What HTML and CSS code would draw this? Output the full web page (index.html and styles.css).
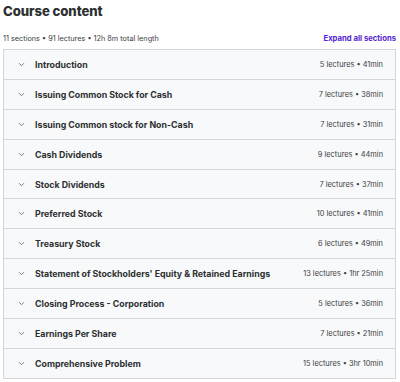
FILE: index.html
```html
<!DOCTYPE html>
<html>
<head>
<meta charset="utf-8">
<link rel="stylesheet" href="styles.css">
</head>
<body>
<div class="page">
  <h2 class="title">Course content</h2>
  <div class="meta">
    <span class="stats">11 sections • 91 lectures • 12h 8m total length</span>
    <span class="expand">Expand all sections</span>
  </div>
  <div class="list">
    <div class="row"><span class="chev"><svg width="7" height="5" viewBox="0 0 7 5"><path d="M1 1.2 L3.5 3.7 L6 1.2" fill="none" stroke="#6a6f73" stroke-width="0.9"/></svg></span><span class="name">Introduction</span><span class="info">5 lectures • 41min</span></div>
    <div class="row"><span class="chev"><svg width="7" height="5" viewBox="0 0 7 5"><path d="M1 1.2 L3.5 3.7 L6 1.2" fill="none" stroke="#6a6f73" stroke-width="0.9"/></svg></span><span class="name">Issuing Common Stock for Cash</span><span class="info">7 lectures • 38min</span></div>
    <div class="row"><span class="chev"><svg width="7" height="5" viewBox="0 0 7 5"><path d="M1 1.2 L3.5 3.7 L6 1.2" fill="none" stroke="#6a6f73" stroke-width="0.9"/></svg></span><span class="name">Issuing Common stock for Non-Cash</span><span class="info">7 lectures • 31min</span></div>
    <div class="row"><span class="chev"><svg width="7" height="5" viewBox="0 0 7 5"><path d="M1 1.2 L3.5 3.7 L6 1.2" fill="none" stroke="#6a6f73" stroke-width="0.9"/></svg></span><span class="name">Cash Dividends</span><span class="info">9 lectures • 44min</span></div>
    <div class="row"><span class="chev"><svg width="7" height="5" viewBox="0 0 7 5"><path d="M1 1.2 L3.5 3.7 L6 1.2" fill="none" stroke="#6a6f73" stroke-width="0.9"/></svg></span><span class="name">Stock Dividends</span><span class="info">7 lectures • 37min</span></div>
    <div class="row"><span class="chev"><svg width="7" height="5" viewBox="0 0 7 5"><path d="M1 1.2 L3.5 3.7 L6 1.2" fill="none" stroke="#6a6f73" stroke-width="0.9"/></svg></span><span class="name">Preferred Stock</span><span class="info">10 lectures • 41min</span></div>
    <div class="row"><span class="chev"><svg width="7" height="5" viewBox="0 0 7 5"><path d="M1 1.2 L3.5 3.7 L6 1.2" fill="none" stroke="#6a6f73" stroke-width="0.9"/></svg></span><span class="name">Treasury Stock</span><span class="info">6 lectures • 49min</span></div>
    <div class="row"><span class="chev"><svg width="7" height="5" viewBox="0 0 7 5"><path d="M1 1.2 L3.5 3.7 L6 1.2" fill="none" stroke="#6a6f73" stroke-width="0.9"/></svg></span><span class="name">Statement of Stockholders' Equity &amp; Retained Earnings</span><span class="info">13 lectures • 1hr 25min</span></div>
    <div class="row"><span class="chev"><svg width="7" height="5" viewBox="0 0 7 5"><path d="M1 1.2 L3.5 3.7 L6 1.2" fill="none" stroke="#6a6f73" stroke-width="0.9"/></svg></span><span class="name">Closing Process - Corporation</span><span class="info">5 lectures • 36min</span></div>
    <div class="row"><span class="chev"><svg width="7" height="5" viewBox="0 0 7 5"><path d="M1 1.2 L3.5 3.7 L6 1.2" fill="none" stroke="#6a6f73" stroke-width="0.9"/></svg></span><span class="name">Earnings Per Share</span><span class="info">7 lectures • 21min</span></div>
    <div class="row"><span class="chev"><svg width="7" height="5" viewBox="0 0 7 5"><path d="M1 1.2 L3.5 3.7 L6 1.2" fill="none" stroke="#6a6f73" stroke-width="0.9"/></svg></span><span class="name">Comprehensive Problem</span><span class="info">15 lectures • 3hr 10min</span></div>
  </div>
</div>
</body>
</html>
```
FILE: styles.css
```css
html, body {
  margin: 0;
  padding: 0;
  background: #ffffff;
}
body {
  font-family: "Inter", "Noto Sans", sans-serif;
  color: #2d2f31;
}
.page {
  padding: 0 4px 0 3px;
}
.title {
  margin: 0;
  padding-top: 1px;
  font-size: 13.2px;
  line-height: 20px;
  font-weight: 800;
  letter-spacing: -0.1px;
}
.meta {
  display: flex;
  justify-content: space-between;
  align-items: center;
  height: 28px;
  padding-top: 6px;
  box-sizing: border-box;
}
.stats {
  font-size: 7.3px;
  color: #3e4143;
}
.expand {
  font-size: 7.7px;
  font-weight: 700;
  color: #5624d0;
}
.list {
  border: 1px solid #d1d7dc;
  border-bottom: none;
}
.row {
  display: flex;
  align-items: center;
  height: 28.9px;
  background: #f7f9fa;
  border-bottom: 1px solid #d1d7dc;
  padding: 0 12px 0 14px;
}
.chev {
  display: flex;
  width: 7px;
  margin-right: 10px;
}
.name {
  flex: 1;
  font-size: 8.8px;
  font-weight: 700;
  color: #2d2f31;
}
.info {
  font-size: 7.4px;
  color: #3e4143;
}
```
